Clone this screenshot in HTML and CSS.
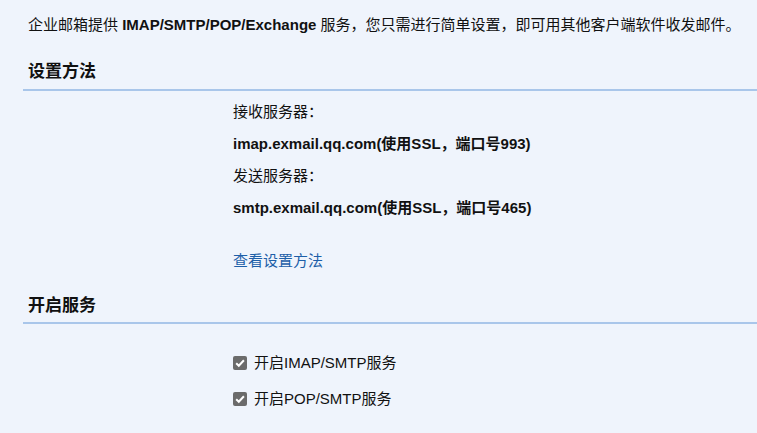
FILE: index.html
```html
<!DOCTYPE html>
<html lang="zh-CN">
<head>
<meta charset="utf-8">
<link rel="stylesheet" href="styles.css">
</head>
<body>
<div class="page">
  <p class="intro">企业邮箱提供 <b>IMAP/SMTP/POP/Exchange</b> 服务，您只需进行简单设置，即可用其他客户端软件收发邮件。</p>

  <h2 class="section-title">设置方法</h2>
  <div class="section-body">
    <div class="row">接收服务器：</div>
    <div class="row strong">imap.exmail.qq.com(使用SSL，端口号993)</div>
    <div class="row">发送服务器：</div>
    <div class="row strong">smtp.exmail.qq.com(使用SSL，端口号465)</div>
    <a class="link" href="#">查看设置方法</a>
  </div>

  <h2 class="section-title second">开启服务</h2>
  <div class="section-body checks">
    <label class="check"><span class="box"><svg width="14" height="14" viewBox="0 0 14 14"><rect x="0" y="0" width="14" height="14" rx="2" fill="#6b6b6b"/><path d="M3.2 7.3 L5.8 9.8 L10.9 4.3" fill="none" stroke="#fff" stroke-width="2"/></svg></span>开启IMAP/SMTP服务</label>
    <label class="check"><span class="box"><svg width="14" height="14" viewBox="0 0 14 14"><rect x="0" y="0" width="14" height="14" rx="2" fill="#6b6b6b"/><path d="M3.2 7.3 L5.8 9.8 L10.9 4.3" fill="none" stroke="#fff" stroke-width="2"/></svg></span>开启POP/SMTP服务</label>
  </div>
</div>
</body>
</html>
```

FILE: styles.css
```css
* { box-sizing: border-box; }
html, body {
  margin: 0;
  padding: 0;
  background: #eff4fc;
}
body {
  font-family: "Liberation Sans", "Noto Sans CJK SC", sans-serif;
  font-size: 15px;
  color: #111;
}
.page {
  height: 433px;
  overflow: hidden;
}
.intro {
  margin: 0;
  padding: 15px 0 0 28px;
  line-height: 20px;
}
.intro b { font-weight: bold; }
.section-title {
  margin: 25px 0 0 23px;
  padding: 0 0 5px 5px;
  font-size: 17px;
  line-height: 24px;
  font-weight: bold;
  border-bottom: 2px solid #a9c6ea;
}
.section-title.second {
  margin-top: 23px;
  padding-bottom: 4px;
}
.section-body {
  padding: 5px 0 0 233px;
  display: flex;
  flex-direction: column;
  align-items: flex-start;
}
.row {
  line-height: 32px;
}
.row.strong { font-weight: bold; }
.link {
  margin-top: 27px;
  line-height: 20px;
  color: #1d5fa8;
  text-decoration: none;
}
.checks {
  padding-top: 29px;
  gap: 16px;
}
.check {
  display: flex;
  align-items: center;
  gap: 7px;
  line-height: 20px;
}
.box {
  display: flex;
  width: 14px;
  height: 14px;
}
```
